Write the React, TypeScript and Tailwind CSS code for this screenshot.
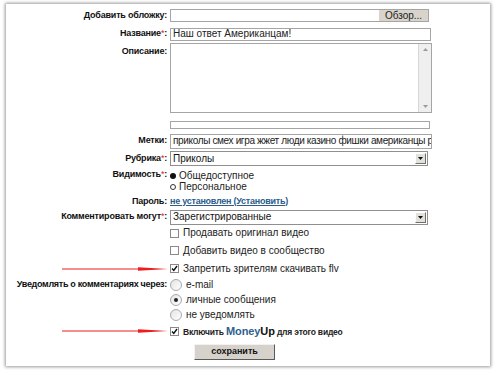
import React from "react";

const label = "w-[162px] shrink-0 text-right font-bold text-[9px] tracking-[-0.2px] text-[#111] pr-[1px]";
const star = <span className="text-[#e02020] font-normal">*</span>;

function Row({
  h,
  lbl,
  req,
  top,
  extra,
  children,
}: {
  h: string;
  lbl?: string;
  req?: boolean;
  top?: boolean;
  extra?: string;
  children?: React.ReactNode;
}) {
  return (
    <div className={`flex ${top ? "items-start" : "items-center"} ${h}`}>
      <div className={`${label} ${extra ?? ""}`}>
        {lbl && (
          <>
            {lbl}
            {req && star}:
          </>
        )}
      </div>
      <div className="ml-[2px] flex items-center">{children}</div>
    </div>
  );
}

function Select({ value }: { value: string }) {
  return (
    <div className="flex h-[15px] w-[258px] items-center border border-[#8f8f8f] bg-white">
      <span className="flex-1 pl-[2px] text-[10px] leading-none text-[#111]">{value}</span>
      <span className="mr-[1px] flex h-[11px] w-[11px] items-center justify-center border border-[#fff] border-b-[#6f6f6f] border-r-[#6f6f6f] bg-[#e3e1dc]">
        <svg width="5" height="3" viewBox="0 0 5 3">
          <path d="M0 0h5L2.5 3z" fill="#111" />
        </svg>
      </span>
    </div>
  );
}

function Check({ on }: { on?: boolean }) {
  return (
    <span className="mr-[4px] flex h-[9px] w-[9px] items-center justify-center border border-[#8a8a8a] bg-white">
      {on && (
        <svg width="7" height="7" viewBox="0 0 7 7">
          <path d="M1 3.5l1.8 2L6 1" stroke="#111" strokeWidth="1.4" fill="none" />
        </svg>
      )}
    </span>
  );
}

function Radio({ on }: { on?: boolean }) {
  return (
    <span className="mr-[4px] flex h-[12px] w-[12px] items-center justify-center rounded-full border border-[#a9a9a9] bg-gradient-to-br from-[#e4e4e4] to-white">
      {on && <span className="h-[4px] w-[4px] rounded-full bg-[#222]" />}
    </span>
  );
}

function Arrow({ y }: { y: string }) {
  return (
    <svg className={`absolute left-[56px] ${y}`} width="106" height="6" viewBox="0 0 106 6">
      <path d="M0 3h80" stroke="#ee1c1c" strokeWidth="1" />
      <path d="M76 1.2L106 3L76 4.8z" fill="#ee1c1c" />
    </svg>
  );
}

export default function App() {
  const txt = "text-[10px] text-[#222] leading-none";
  return (
    <div className="h-[373px] w-[497px] bg-white pl-[6px] pt-[4px] font-['Liberation_Sans',Arial,sans-serif]">
      <div className="relative flex h-[362px] w-[484px] flex-col bg-white pt-[2px] shadow-[0_0_3px_1px_rgba(0,0,0,0.4)]">
        <Row h="h-[19px]" lbl="Добавить обложку">
          <div className="flex h-[13px] w-[259px] border border-[#a5a5a5] bg-white">
            <span className="flex-1" />
            <span className="flex w-[49px] items-center justify-center bg-[#d8d4cc] text-[10px] leading-none text-[#222]">
              Обзор...
            </span>
          </div>
        </Row>
        <Row h="h-[18px]" lbl="Название" req>
          <div className="flex h-[13px] w-[261px] items-center border border-[#a5a5a5] bg-white pl-[2px]">
            <span className={txt}>Наш ответ Американцам!</span>
          </div>
        </Row>
        <Row h="h-[75px]" lbl="Описание" top extra="pt-[2px]">
          <div className="flex h-[70px] w-[262px] border border-[#a5a5a5] bg-white">
            <span className="flex-1" />
            <span className="flex w-[13px] flex-col items-center justify-between border-l border-[#d6d6d6] bg-[#efefef] py-[4px]">
              <svg width="5" height="3" viewBox="0 0 5 3">
                <path d="M0 3h5L2.5 0z" fill="#9a9a9a" />
              </svg>
              <svg width="5" height="3" viewBox="0 0 5 3">
                <path d="M0 0h5L2.5 3z" fill="#9a9a9a" />
              </svg>
            </span>
          </div>
        </Row>
        <Row h="h-[14px]">
          <div className="h-[8px] w-[260px] border border-[#a5a5a5] bg-white" />
        </Row>
        <Row h="h-[18px]" lbl="Метки">
          <div className="flex h-[15px] w-[262px] items-center overflow-hidden whitespace-nowrap border border-[#a5a5a5] bg-white pl-[2px]">
            <span className="text-[10px] leading-none tracking-[-0.35px] text-[#222]">
              приколы смех игра жжет люди казино фишки американцы р
            </span>
          </div>
        </Row>
        <Row h="h-[17px]" lbl="Рубрика" req>
          <Select value="Приколы" />
        </Row>
        <Row h="h-[25px]" lbl="Видимость" req top extra="pt-[1px]">
          <div className={`flex flex-col pt-[3px] ${txt}`}>
            <span className="flex h-[11px] items-center">
              <span className="mr-[3px] h-[6px] w-[6px] rounded-full bg-[#111]" />
              Общедоступное
            </span>
            <span className="flex h-[11px] items-center">
              <span className="mr-[3px] h-[6px] w-[6px] rounded-full border border-[#333]" />
              Персональное
            </span>
          </div>
        </Row>
        <div className="flex h-[18px] items-center pt-[1px]">
          <div className={label}>Пароль:</div>
          <span className="ml-[2px] text-[9px] font-bold tracking-[-0.25px] text-[#2b5c8a] underline">
            не установлен (Установить)
          </span>
        </div>
        <Row h="h-[14px]" lbl="Комментировать могут" req>
          <Select value="Зарегистрированные" />
        </Row>
        <Row h="h-[18px]">
          <Check />
          <span className={txt}>Продавать оригинал видео</span>
        </Row>
        <Row h="h-[17px]">
          <Check />
          <span className={txt}>Добавить видео в сообщество</span>
        </Row>
        <Row h="h-[19px]">
          <Check on />
          <span className={txt}>Запретить зрителям скачивать flv</span>
        </Row>
        <Row h="h-[14px]" lbl="Уведомлять о комментариях через" extra="tracking-[-0.3px]">
          <Radio />
          <span className={txt}>e-mail</span>
        </Row>
        <Row h="h-[15px]">
          <Radio on />
          <span className={txt}>личные сообщения</span>
        </Row>
        <Row h="h-[16px]">
          <Radio />
          <span className={txt}>не уведомлять</span>
        </Row>
        <Row h="h-[17px]">
          <Check on />
          <span className="flex items-baseline text-[8.5px] font-bold tracking-[-0.2px] text-[#222]">
            Включить&nbsp;
            <span className="text-[11px] tracking-[-0.1px] text-[#2f5f8f]">Money</span>
            <span className="text-[11px] tracking-[-0.1px] text-[#111]">Up</span>
            &nbsp;для этого видео
          </span>
        </Row>
        <div className="flex pl-[188px] pt-[4px]">
          <button className="flex h-[16px] w-[81px] items-center justify-center border border-[#f4f2ee] border-b-[#5a5a5a] border-r-[#5a5a5a] bg-[#d6d2cb] text-[9px] font-bold text-[#111]">
            сохранить
          </button>
        </div>
        <Arrow y="top-[262px]" />
        <Arrow y="top-[324px]" />
      </div>
    </div>
  );
}
